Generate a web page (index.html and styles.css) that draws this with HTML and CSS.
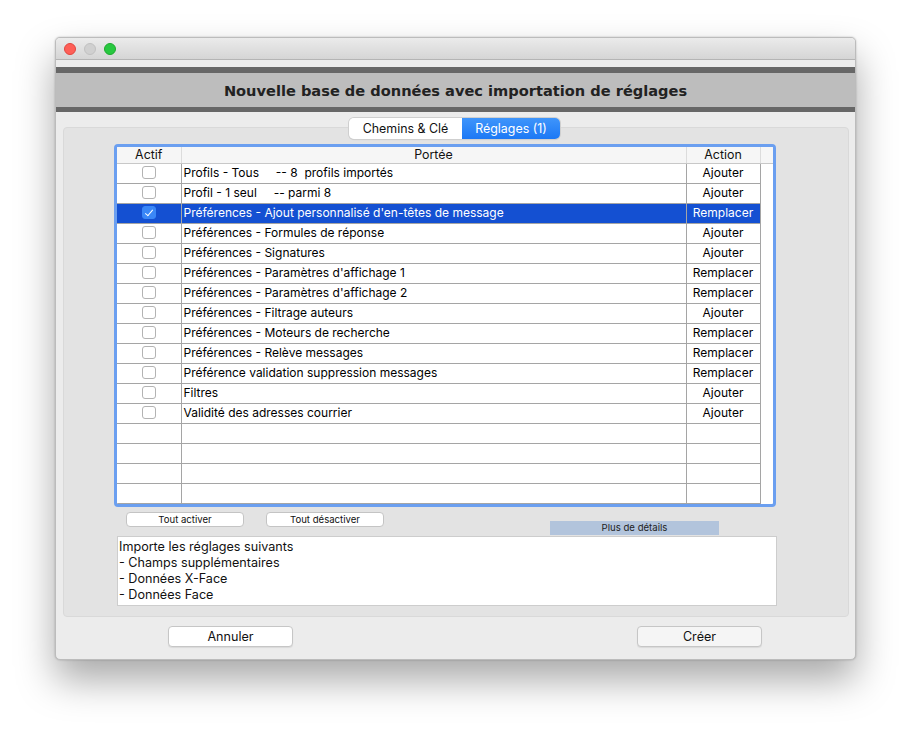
FILE: index.html
```html
<!DOCTYPE html>
<html lang="fr">
<head>
  <meta charset="UTF-8">
  <title>Nouvelle base de données</title>
  <link rel="stylesheet" href="styles.css">
</head>
<body>
  <div class="window">
    <div class="titlebar">
      <span class="light red"></span>
      <span class="light gray"></span>
      <span class="light green"></span>
    </div>
    <div class="banner">Nouvelle base de données avec importation de réglages</div>

    <div class="content">
      <div class="tabs">
        <span class="tab">Chemins &amp; Clé</span>
        <span class="tab active">Réglages (1)</span>
      </div>

      <div class="panel">
        <div class="table-ring">
          <table class="list">
            <colgroup>
              <col class="c-actif">
              <col class="c-portee">
              <col class="c-action">
              <col class="c-fill">
            </colgroup>
            <thead>
              <tr><th>Actif</th><th>Portée</th><th>Action</th><th></th></tr>
            </thead>
            <tbody id="rows"></tbody>
          </table>
        </div>

        <div class="toolbar">
          <button class="mini">Tout activer</button>
          <button class="mini">Tout désactiver</button>
          <span class="details">Plus de détails</span>
        </div>

        <div class="description">
          Importe les réglages suivants<br>
          - Champs supplémentaires<br>
          - Données X-Face<br>
          - Données Face
        </div>
      </div>

      <div class="actions">
        <button class="push">Annuler</button>
        <button class="push default">Créer</button>
      </div>
    </div>
  </div>

  <script>
    const settings = [
      ['Profils - Tous     -- 8  profils importés', 'Ajouter'],
      ['Profil - 1 seul     -- parmi 8', 'Ajouter'],
      ["Préférences - Ajout personnalisé d'en-têtes de message", 'Remplacer', true],
      ['Préférences - Formules de réponse', 'Ajouter'],
      ['Préférences - Signatures', 'Ajouter'],
      ["Préférences - Paramètres d'affichage 1", 'Remplacer'],
      ["Préférences - Paramètres d'affichage 2", 'Remplacer'],
      ['Préférences - Filtrage auteurs', 'Ajouter'],
      ['Préférences - Moteurs de recherche', 'Remplacer'],
      ['Préférences - Relève messages', 'Remplacer'],
      ['Préférence validation suppression messages', 'Remplacer'],
      ['Filtres', 'Ajouter'],
      ['Validité des adresses courrier', 'Ajouter']
    ];

    const tbody = document.getElementById('rows');
    let html = '';
    for (const [label, action, on] of settings) {
      html += '<tr' + (on ? ' class="selected"' : '') + '>' +
        '<td class="check"><span class="box' + (on ? ' on' : '') + '"></span></td>' +
        '<td class="label">' + label + '</td>' +
        '<td class="act">' + action + '</td><td class="fill"></td></tr>';
    }
    for (let i = 0; i < 4; i++) {
      html += '<tr><td></td><td></td><td></td><td class="fill"></td></tr>';
    }
    tbody.innerHTML = html;
  </script>
</body>
</html>
```

FILE: styles.css
```css
* {
  box-sizing: border-box;
  margin: 0;
  padding: 0;
}
html, body {
  height: 100%;
}
body {
  background: #fff;
  font-family: Inter, 'Liberation Sans', Arial, sans-serif;
  color: #000;
  padding: 37px 0 0 55px;
}
.window {
  width: 801px;
  height: 623px;
  background: #ececec;
  border: 1px solid #bcbcbc;
  border-radius: 5px;
  box-shadow: 0 20px 38px rgba(0, 0, 0, 0.34), 0 0 2px rgba(0, 0, 0, 0.25);
  display: flex;
  flex-direction: column;
  overflow: hidden;
}
.titlebar {
  height: 22px;
  flex: none;
  display: flex;
  align-items: center;
  gap: 8px;
  padding-left: 8px;
  background: linear-gradient(#ebebeb, #d5d5d5);
  border-bottom: 1px solid #b4b4b4;
}
.light {
  width: 12px;
  height: 12px;
  border-radius: 50%;
}
.light.red { background: #fe5f57; border: 1px solid #e1463f; }
.light.gray { background: #d0d0d0; border: 1px solid #c1c1c1; }
.light.green { background: #28c840; border: 1px solid #1daa2e; }

.banner {
  margin-top: 7px;
  height: 45px;
  flex: none;
  background: #bdbdbd;
  border-top: 6px solid #676767;
  border-bottom: 5px solid #676767;
  display: flex;
  align-items: center;
  justify-content: center;
  font-family: 'DejaVu Sans', sans-serif;
  font-weight: bold;
  font-size: 14.6px;
  color: #222;
}

.content {
  flex: 1;
  display: flex;
  flex-direction: column;
  padding: 6px 6px 0 7px;
}
.tabs {
  align-self: center;
  display: flex;
  height: 21px;
  margin-right: 3px;
  margin-bottom: -12px;
  position: relative;
  z-index: 1;
  border-radius: 5px;
  box-shadow: 0 0 0 1px #cfcfcf, 0 1px 1px rgba(0, 0, 0, 0.12);
  font-size: 12.4px;
}
.tab {
  display: flex;
  align-items: center;
  justify-content: center;
  background: #fff;
  color: #111;
  width: 113px;
  border-radius: 5px 0 0 5px;
}
.tab.active {
  width: 98px;
  background: linear-gradient(#3f95fb, #1c78f5);
  color: #fff;
  border-radius: 0 5px 5px 0;
}

.panel {
  height: 490px;
  background: #e3e3e3;
  border: 1px solid #d9d9d9;
  border-radius: 4px;
  padding: 16px 72px 0 50px;
  display: flex;
  flex-direction: column;
}
.table-ring {
  height: 363px;
  border: 3px solid #6b9ff0;
  border-radius: 4px;
  background: #fff;
  overflow: hidden;
}
.list {
  width: 657px;
  table-layout: fixed;
  border-collapse: collapse;
  font-size: 12px;
}
.c-actif { width: 64px; }
.c-portee { width: 505px; }
.c-action { width: 74px; }
.c-fill { width: 14px; }
.list th {
  height: 16px;
  font-weight: normal;
  background: #f6f6f6;
  border-bottom: 1px solid #c8c8c8;
  border-right: 1px solid #dcdcdc;
  line-height: 14px;
  font-size: 12.4px;
  color: #111;
}
.list th:last-child { border-right: none; }
.list td {
  height: 20px;
  border: 1px solid #a5a5a5;
  border-top: none;
  line-height: 18px;
  white-space: pre;
  overflow: hidden;
}
.list td:first-child { border-left: none; }
.list td.fill {
  border: none;
  background: #fff;
}
.list td.label { padding-left: 2px; }
.list td.act { text-align: center; }
.list td.check { text-align: center; }
.list tr.selected td {
  background: #1450d2;
  color: #fff;
}
.list tr.selected td.fill { background: #fff; }

.box {
  display: inline-block;
  width: 14px;
  height: 13px;
  vertical-align: -2px;
  border: 1px solid #b3b3b3;
  border-radius: 3px;
  background: #fff;
  position: relative;
}
.box.on {
  background: #3a87f7;
  border-color: #3a87f7;
}
.box.on::after {
  content: '';
  position: absolute;
  left: 4px;
  top: 1px;
  width: 3px;
  height: 7px;
  border: solid #fff;
  border-width: 0 1.5px 1.5px 0;
  transform: rotate(40deg);
}

.toolbar {
  height: 29px;
  flex: none;
  display: flex;
  align-items: flex-start;
  padding-top: 5px;
  padding-left: 12px;
}
.mini {
  width: 118px;
  height: 15px;
  font-family: inherit;
  font-size: 9.6px;
  line-height: 13px;
  background: #fff;
  border: 1px solid #c4c4c4;
  border-radius: 4px;
  color: #111;
}
.mini + .mini { margin-left: 22px; }
.details {
  margin-left: 166px;
  margin-top: 9px;
  width: 169px;
  height: 14px;
  background: #b2c4dc;
  font-size: 9.6px;
  line-height: 14px;
  text-align: center;
  color: #222;
}
.description {
  height: 70px;
  margin-left: 3px;
  margin-right: -1px;
  background: #fff;
  border: 1px solid #cdcdcd;
  padding: 2px 1px;
  font-size: 12.6px;
  line-height: 16px;
  color: #111;
}

.actions {
  display: flex;
  padding: 9px 0 0 105px;
}
.push {
  width: 125px;
  height: 21px;
  font-family: inherit;
  font-size: 12.6px;
  background: #fff;
  border: 1px solid #c6c6c6;
  border-radius: 4px;
  box-shadow: 0 1px 1px rgba(0, 0, 0, 0.08);
  color: #111;
}
.push.default {
  margin-left: 344px;
  background: #f5f5f5;
}
```
